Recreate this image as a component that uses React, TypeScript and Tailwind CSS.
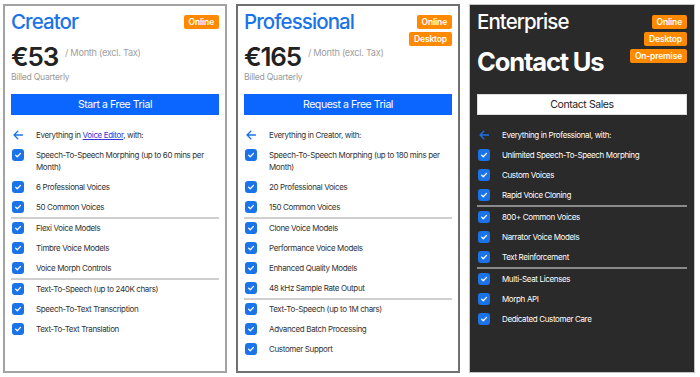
import React from "react";

type Group = string[];

const Check = () => (
  <span className="mt-0 flex h-[12px] w-[12px] shrink-0 items-center justify-center rounded-[3px] bg-[#1a73e8]">
    <svg width="12" height="12" viewBox="0 0 12 12">
      <path d="M3.6 6.1 L5.3 7.8 L8.5 4.4" fill="none" stroke="white" strokeWidth="1.3" strokeLinecap="round" strokeLinejoin="round" />
    </svg>
  </span>
);

const Arrow = () => (
  <span className="flex h-[12px] w-[12px] shrink-0 items-center justify-center">
    <svg width="12" height="12" viewBox="0 0 12 12">
      <path d="M10.5 6 H2 M5.8 2.2 L2 6 L5.8 9.8" fill="none" stroke="#1a73e8" strokeWidth="1.3" strokeLinecap="round" strokeLinejoin="round" />
    </svg>
  </span>
);

const Badge = ({ label }: { label: string }) => (
  <span className="flex h-[14px] items-center rounded-[2px] bg-[#ff8a00] px-[5px] text-[8.5px] font-semibold tracking-[-0.02em] text-white">
    {label}
  </span>
);

function Features({ intro, groups, dark }: { intro: React.ReactNode; groups: Group[]; dark?: boolean }) {
  const text = dark ? "text-white" : "text-[#333333]";
  return (
    <div className={`mt-[10px] flex flex-col text-[8px] leading-[12px] tracking-[-0.045em] ${text}`}>
      <div className="flex items-start gap-[12px] py-[4px] pl-[1px]">
        <Arrow />
        <span>{intro}</span>
      </div>
      {groups.map((g, gi) => (
        <div key={gi} className="flex flex-col">
          {gi > 0 && <div className={dark ? "h-[2px] bg-[#8a8a8a]" : "-mb-px h-[2px] bg-[#cfcfcf]"} />}
          {g.map((f) => (
            <div key={f} className="flex items-start gap-[12px] py-[4px] pl-[1px]">
              <Check />
              <span>{f}</span>
            </div>
          ))}
        </div>
      ))}
    </div>
  );
}

function PriceHeader({ title, price, badges }: { title: string; price: string; badges: string[] }) {
  return (
    <div className="flex h-[85px] justify-between">
      <div className="flex flex-col">
        <div className="text-[20.5px] font-medium leading-[26px] tracking-[-0.045em] text-[#1a73e8]">{title}</div>
        <div className="mt-[9px] flex items-start">
          <span className="text-[26px] font-semibold leading-[26px] tracking-[-0.045em] text-[#222222]">{price}</span>
          <span className="ml-[7px] mt-[3px] text-[9.2px] leading-[11px] tracking-[-0.03em] text-[#a0a0a0]">/ Month (excl. Tax)</span>
        </div>
        <div className="mt-[2px] text-[8.6px] leading-[11px] tracking-[-0.03em] text-[#9a9a9a]">Billed Quarterly</div>
      </div>
      <div className="flex flex-col items-end gap-[3px] pt-[6px]">
        {badges.map((b) => (
          <Badge key={b} label={b} />
        ))}
      </div>
    </div>
  );
}

export default function App() {
  return (
    <div className="flex h-[377px] w-[700px] gap-[9px] bg-white pl-[3px] pt-[4px]" style={{ fontFamily: "Inter, 'Liberation Sans', sans-serif" }}>
      {/* Creator */}
      <div className="flex h-[369px] w-[224px] flex-col border-2 border-[#a3a3a3] bg-white px-[6px] pt-[3px]">
        <PriceHeader title="Creator" price="€53" badges={["Online"]} />
        <div className="flex h-[21px] items-center justify-center bg-[#0a66ff] text-[10.5px] tracking-[-0.04em] text-white">Start a Free Trial</div>
        <Features
          intro={
            <>
              Everything in <span className="text-[#3535d8] underline">Voice Editor</span>, with:
            </>
          }
          groups={[
            ["Speech-To-Speech Morphing (up to 60 mins per Month)", "6 Professional Voices", "50 Common Voices"],
            ["Flexi Voice Models", "Timbre Voice Models", "Voice Morph Controls"],
            ["Text-To-Speech (up to 240K chars)", "Speech-To-Text Transcription", "Text-To-Text Translation"],
          ]}
        />
      </div>

      {/* Professional */}
      <div className="flex h-[369px] w-[224px] flex-col border-2 border-[#707070] bg-white px-[6px] pt-[3px]">
        <PriceHeader title="Professional" price="€165" badges={["Online", "Desktop"]} />
        <div className="flex h-[21px] items-center justify-center bg-[#0a66ff] text-[10.5px] tracking-[-0.04em] text-white">Request a Free Trial</div>
        <Features
          intro="Everything in Creator, with:"
          groups={[
            ["Speech-To-Speech Morphing (up to 180 mins per Month)", "20 Professional Voices", "150 Common Voices"],
            ["Clone Voice Models", "Performance Voice Models", "Enhanced Quality Models", "48 kHz Sample Rate Output"],
            ["Text-To-Speech (up to 1M chars)", "Advanced Batch Processing", "Customer Support"],
          ]}
        />
      </div>

      {/* Enterprise */}
      <div className="flex h-[369px] w-[226px] flex-col border border-[#c4c4c4] bg-[#2a2a2a] px-[7px] pt-[4px]">
        <div className="flex h-[85px] justify-between">
          <div className="flex flex-col">
            <div className="text-[20.5px] font-medium leading-[26px] tracking-[-0.045em] text-white">Enterprise</div>
            <div className="mt-[14px] text-[25.5px] font-bold leading-[26px] tracking-[-0.045em] text-white">Contact Us</div>
          </div>
          <div className="flex flex-col items-end gap-[3px] pt-[6px]">
            <Badge label="Online" />
            <Badge label="Desktop" />
            <Badge label="On-premise" />
          </div>
        </div>
        <div className="flex h-[21px] items-center justify-center border border-[#dddddd] bg-white text-[10.5px] tracking-[-0.04em] text-[#222222]">Contact Sales</div>
        <Features
          dark
          intro="Everything in Professional, with:"
          groups={[
            ["Unlimited Speech-To-Speech Morphing", "Custom Voices", "Rapid Voice Cloning"],
            ["800+ Common Voices", "Narrator Voice Models", "Text Reinforcement"],
            ["Multi-Seat Licenses", "Morph API", "Dedicated Customer Care"],
          ]}
        />
      </div>
    </div>
  );
}
